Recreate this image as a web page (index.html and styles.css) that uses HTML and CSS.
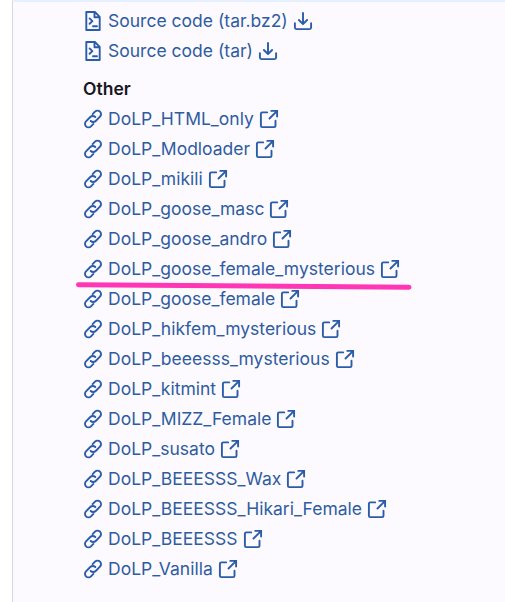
FILE: index.html
```
<!DOCTYPE html>
<html lang="en">
<head>
<meta charset="utf-8">
<title>Release assets</title>
<link rel="stylesheet" href="styles.css">
</head>
<body>
<svg class="sprite" aria-hidden="true">
  <symbol id="doc" viewBox="0 0 20 20"><path d="M3.3 1h8.6l4.8 4.8V19H3.3zM11.5 1.2V6.3h5M6.6 7.4l2.8 2.7-2.8 2.7M10 15.2h4"/></symbol>
  <symbol id="download" viewBox="0 0 20 20"><path d="M10 2v10.8M5.9 9l4.1 4.1L14.1 9M1.9 12.3v4.3q0 1.5 1.5 1.5h13.2q1.5 0 1.5-1.5v-4.3"/></symbol>
  <symbol id="link" viewBox="0 0 20 20"><path d="M9.6 5.1L12 2.7A3.5 3.5 0 0 1 17 7.7L12.7 12A3.5 3.5 0 0 1 7.7 12M10.4 14.9L8 17.3A3.5 3.5 0 0 1 3 12.3L7.3 8A3.5 3.5 0 0 1 12.3 8"/></symbol>
  <symbol id="external" viewBox="0 0 20 20"><path d="M8.2 3.4H3.3q-1.4 0-1.4 1.4v11.9q0 1.4 1.4 1.4h11.8q1.4 0 1.4-1.4v-5M12.3 1.9h5.8v5.7M17.9 2.1L10.5 9.5" stroke-linejoin="miter"/></symbol>
</svg>
<main class="panel">
  <ul class="assets" id="sources">
    <li><a class="asset"><svg><use href="#doc"/></svg><span>Source code (tar.bz2)</span><svg><use href="#download"/></svg></a></li>
    <li><a class="asset"><svg><use href="#doc"/></svg><span>Source code (tar)</span><svg><use href="#download"/></svg></a></li>
  </ul>
  <h2 class="heading">Other</h2>
  <ul class="assets">
    <li><a class="asset"><svg><use href="#link"/></svg><span>DoLP_HTML_only</span><svg><use href="#external"/></svg></a></li>
    <li><a class="asset"><svg><use href="#link"/></svg><span>DoLP_Modloader</span><svg><use href="#external"/></svg></a></li>
    <li><a class="asset"><svg><use href="#link"/></svg><span>DoLP_mikili</span><svg><use href="#external"/></svg></a></li>
    <li><a class="asset"><svg><use href="#link"/></svg><span>DoLP_goose_masc</span><svg><use href="#external"/></svg></a></li>
    <li><a class="asset"><svg><use href="#link"/></svg><span>DoLP_goose_andro</span><svg><use href="#external"/></svg></a></li>
    <li class="marked"><a class="asset"><svg><use href="#link"/></svg><span>DoLP_goose_female_mysterious</span><svg><use href="#external"/></svg></a>
      <svg class="stroke" viewBox="0 0 336 8"><path d="M2.5 2.8Q160 4 333 5.2"/></svg></li>
    <li><a class="asset"><svg><use href="#link"/></svg><span>DoLP_goose_female</span><svg><use href="#external"/></svg></a></li>
    <li><a class="asset"><svg><use href="#link"/></svg><span>DoLP_hikfem_mysterious</span><svg><use href="#external"/></svg></a></li>
    <li><a class="asset"><svg><use href="#link"/></svg><span>DoLP_beeesss_mysterious</span><svg><use href="#external"/></svg></a></li>
    <li><a class="asset"><svg><use href="#link"/></svg><span>DoLP_kitmint</span><svg><use href="#external"/></svg></a></li>
    <li><a class="asset"><svg><use href="#link"/></svg><span>DoLP_MIZZ_Female</span><svg><use href="#external"/></svg></a></li>
    <li><a class="asset"><svg><use href="#link"/></svg><span>DoLP_susato</span><svg><use href="#external"/></svg></a></li>
    <li><a class="asset"><svg><use href="#link"/></svg><span>DoLP_BEEESSS_Wax</span><svg><use href="#external"/></svg></a></li>
    <li><a class="asset"><svg><use href="#link"/></svg><span>DoLP_BEEESSS_Hikari_Female</span><svg><use href="#external"/></svg></a></li>
    <li><a class="asset"><svg><use href="#link"/></svg><span>DoLP_BEEESSS</span><svg><use href="#external"/></svg></a></li>
    <li><a class="asset"><svg><use href="#link"/></svg><span>DoLP_Vanilla</span><svg><use href="#external"/></svg></a></li>
  </ul>
</main>
</body>
</html>
```
FILE: styles.css
```
* { box-sizing: border-box; }
body {
  margin: 0;
  background: #fff;
  font-family: Inter, "Liberation Sans", sans-serif;
  font-size: 17.5px;
}
.sprite { position: absolute; width: 0; height: 0; }
.panel {
  height: 602px;
  margin-left: 12px;
  padding: 4px 0 0 70px;
  border-left: 1px solid #d8d7df;
  border-top: 2px solid #e6f0ff;
  background: #fcfaff;
  overflow: hidden;
}
.assets { list-style: none; margin: 0; padding: 0; }
.assets li { height: 30px; }
.asset {
  display: flex;
  align-items: center;
  gap: 5px;
  height: 30px;
  color: #2f5ca0;
  white-space: nowrap;
}
.asset span {
  padding-bottom: 2px;
  letter-spacing: 0.01px;
}
.asset svg {
  flex: none;
  width: 20px;
  height: 20px;
  fill: none;
  stroke: #2b5ca8;
  stroke-width: 1.9;
  stroke-linecap: round;
  stroke-linejoin: round;
}
.heading {
  margin: 8px 0 0;
  font-size: 17.5px;
  font-weight: 600;
  line-height: 30px;
  color: #18171d;
}
.marked { position: relative; }
.stroke {
  position: absolute;
  left: -7px;
  top: 28px;
  width: 336px;
  height: 8px;
  fill: none;
  stroke: #ff36b5;
  stroke-width: 5;
  stroke-linecap: round;
}
```
